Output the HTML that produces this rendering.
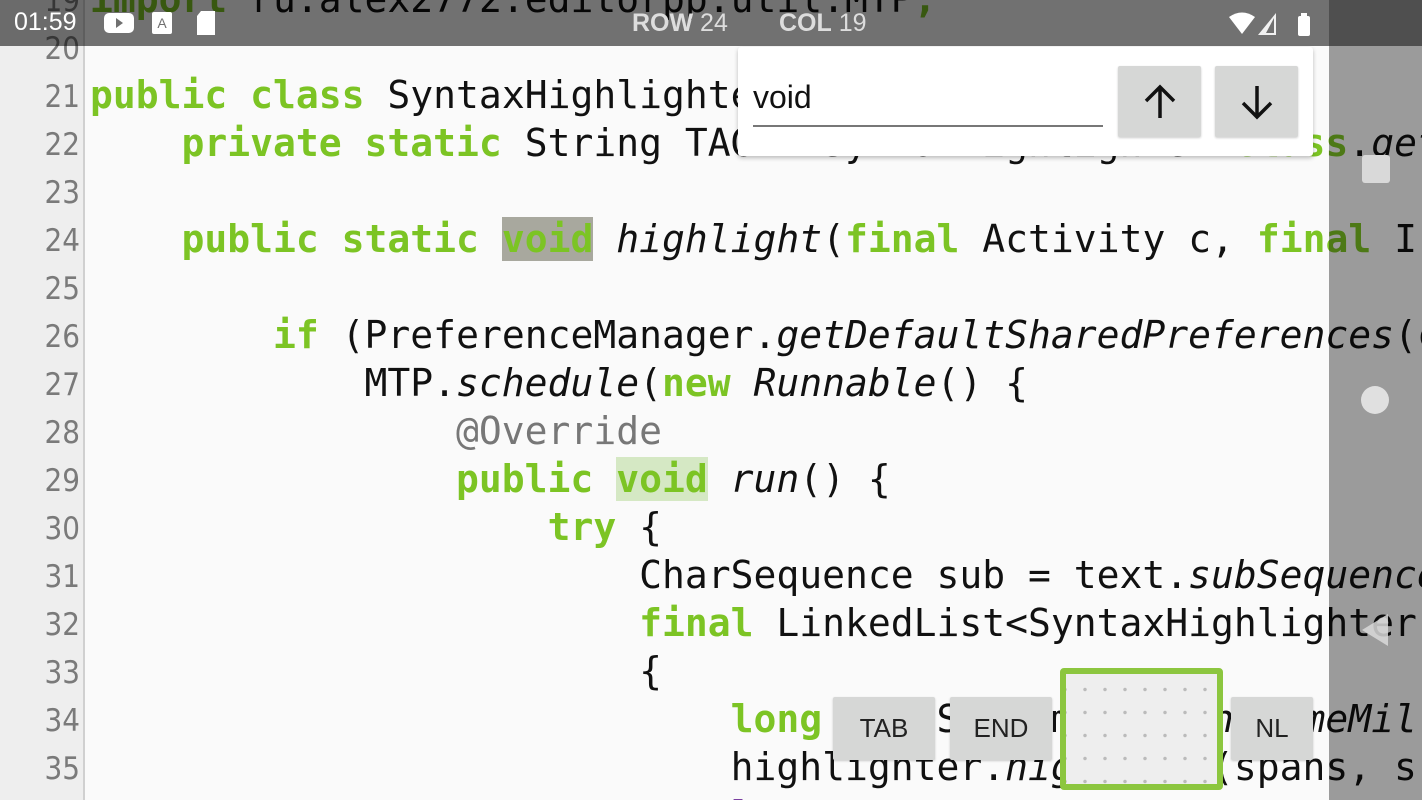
<!DOCTYPE html>
<html style="overflow:hidden;height:800px"><head><meta charset="utf-8"><style>
*{margin:0;padding:0;box-sizing:border-box}
body{width:1422px;height:800px;overflow:hidden;background:#fafafa;position:relative;font-family:"Liberation Sans",sans-serif}
.gut{position:absolute;left:0;top:0;width:85px;height:800px;background:#eeeeee;border-right:2px solid #d0d0d0}
.ln{position:absolute;width:80px;text-align:right;font-size:31px;color:#7a7a7a;line-height:48px;font-family:"DejaVu Sans Condensed","Liberation Sans",sans-serif}
.c{position:absolute;left:90px;font-family:"DejaVu Sans Mono",monospace;font-size:38px;line-height:48px;white-space:pre;color:#111}
.k{color:#7cc424;font-weight:bold}
.i{font-style:italic}
.a{color:#777}
.sel{background:#a8a89e}
.hl{background:#d5e8c4}
.sb{position:absolute;left:0;top:0;width:1422px;height:46px;background:rgba(0,0,0,0.55)}
.nav{position:absolute;left:1329px;top:46px;width:93px;height:754px;background:rgba(0,0,0,0.38)}
.nav2{position:absolute;left:1329px;top:0;width:93px;height:46px;background:rgba(0,0,0,0.3)}
.card{position:absolute;left:738px;top:47px;width:575px;height:109px;background:#fff;border-radius:3px;box-shadow:0 2px 4px rgba(0,0,0,0.25)}
.btn{position:absolute;background:#d6d7d6;border-radius:2px;box-shadow:0 1px 2px rgba(0,0,0,0.2);display:flex;align-items:center;justify-content:center;font-size:26px;color:#222}
#wrap{position:absolute;left:0;top:0;width:1422px;height:800px;overflow:hidden}
</style></head><body><div id="wrap">
<div class="gut"></div>
<div class="ln" style="top:-23px;left:0">19</div>
<div class="ln" style="top:25px;left:0">20</div>
<div class="ln" style="top:73px;left:0">21</div>
<div class="ln" style="top:121px;left:0">22</div>
<div class="ln" style="top:169px;left:0">23</div>
<div class="ln" style="top:217px;left:0">24</div>
<div class="ln" style="top:265px;left:0">25</div>
<div class="ln" style="top:313px;left:0">26</div>
<div class="ln" style="top:361px;left:0">27</div>
<div class="ln" style="top:409px;left:0">28</div>
<div class="ln" style="top:457px;left:0">29</div>
<div class="ln" style="top:505px;left:0">30</div>
<div class="ln" style="top:553px;left:0">31</div>
<div class="ln" style="top:601px;left:0">32</div>
<div class="ln" style="top:649px;left:0">33</div>
<div class="ln" style="top:697px;left:0">34</div>
<div class="ln" style="top:745px;left:0">35</div>
<div class="ln" style="top:793px;left:0">36</div>

<div class="c" style="top:-25px"><span class="k">import</span> ru.alex2772.editorpp.util.MTP<span class="k">;</span></div>
<div class="c" style="top:71px"><span class="k">public class</span> SyntaxHighlighter {</div>
<div class="c" style="top:119px">    <span class="k">private static</span> String TAG = SyntaxHighlighter.<span class="k">class</span>.<span class="i">getName</span>();</div>
<div class="c" style="top:215px">    <span class="k">public static</span> <span class="k sel">void</span> <span class="i">highlight</span>(<span class="k">final</span> Activity c, <span class="k">final</span> I</div>
<div class="c" style="top:311px">        <span class="k">if</span> (PreferenceManager.<span class="i">getDefaultSharedPreferences</span>(c)</div>
<div class="c" style="top:359px">            MTP.<span class="i">schedule</span>(<span class="k">new</span> <span class="i">Runnable</span>() {</div>
<div class="c a" style="top:407px">                @Override</div>
<div class="c" style="top:455px">                <span class="k">public</span> <span class="k hl">void</span> <span class="i">run</span>() {</div>
<div class="c" style="top:503px">                    <span class="k">try</span> {</div>
<div class="c" style="top:551px">                        CharSequence sub = text.<span class="i">subSequence</span>(</div>
<div class="c" style="top:599px">                        <span class="k">final</span> LinkedList&lt;SyntaxHighlighter</div>
<div class="c" style="top:647px">                        {</div>
<div class="c" style="top:695px">                            <span class="k">long</span> t = System.<span class="i">currentTimeMillis</span>();</div>
<div class="c" style="top:743px">                            highlighter.<span class="i">highlight</span>(spans, s</div>
<div class="c" style="top:791px">                            <span style="color:#7a3fa0">long</span></div>

<div class="sb"></div>
<div class="nav2"></div>
<div class="nav"></div>
<div style="position:absolute;left:14px;top:8px;color:#fff;font-size:25px">01:59</div>
<svg style="position:absolute;left:103px;top:12px" width="32" height="22"><rect x="1" y="1" width="30" height="20" rx="5" fill="#fff"/><path d="M13 6 L20 11 L13 16Z" fill="#707070"/></svg>
<svg style="position:absolute;left:152px;top:12px" width="20" height="22"><rect x="0" y="0" width="20" height="22" rx="2" fill="#fff"/><text x="10" y="16" font-size="14" text-anchor="middle" fill="#707070" font-family="Liberation Sans">A</text></svg>
<svg style="position:absolute;left:195px;top:10px" width="22" height="26"><path d="M6 1 H20 V25 H2 V6Z" fill="#fff"/></svg>
<div style="position:absolute;left:632px;top:9px;color:#ddd;font-size:25px"><b>ROW</b> 24</div>
<div style="position:absolute;left:779px;top:9px;color:#ddd;font-size:25px"><b>COL</b> 19</div>
<svg style="position:absolute;left:1228px;top:12px" width="90" height="24"><path d="M1 5 Q14 -4 27 5 L14 22Z" fill="#fff"/><path d="M48 1 V23 H30Z" fill="#fff" opacity=".9"/><path d="M46 6 V21 H38Z" fill="#707070"/><rect x="70" y="4" width="12" height="20" rx="2" fill="#fff"/><rect x="73" y="1" width="6" height="4" fill="#fff"/></svg>

<div style="position:absolute;left:1362px;top:155px;width:28px;height:28px;background:#d9d9d9;border-radius:3px"></div>
<div style="position:absolute;left:1361px;top:386px;width:28px;height:28px;background:#e0e0e0;border-radius:50%"></div>
<svg style="position:absolute;left:1360px;top:612px" width="30" height="36"><path d="M28 2 V34 L2 18Z" fill="#d9d9d9" opacity=".85"/></svg>

<div class="card">
 <div style="position:absolute;left:15px;top:32px;font-size:32px;color:#111">void</div>
 <div style="position:absolute;left:15px;top:78px;width:350px;height:2px;background:#777"></div>
</div>
<div class="btn" style="left:1118px;top:66px;width:83px;height:71px"><svg width="34" height="36"><path d="M17 34 V3 M3 17 L17 3 L31 17" stroke="#111" stroke-width="3.5" fill="none"/></svg></div>
<div class="btn" style="left:1215px;top:66px;width:83px;height:71px"><svg width="34" height="36"><path d="M17 2 V33 M3 19 L17 33 L31 19" stroke="#111" stroke-width="3.5" fill="none"/></svg></div>

<div class="btn" style="left:833px;top:697px;width:102px;height:63px">TAB</div>
<div class="btn" style="left:950px;top:697px;width:102px;height:63px">END</div>
<div class="btn" style="left:1231px;top:697px;width:82px;height:63px">NL</div>
<div style="position:absolute;left:1060px;top:668px;width:163px;height:122px;border:6px solid #8cc63f;border-radius:4px;background:#eeeeee;background-image:radial-gradient(circle,#bbb 1.5px,transparent 2px);background-size:20px 23px;background-position:9px 4px"></div>
</div></body></html>
